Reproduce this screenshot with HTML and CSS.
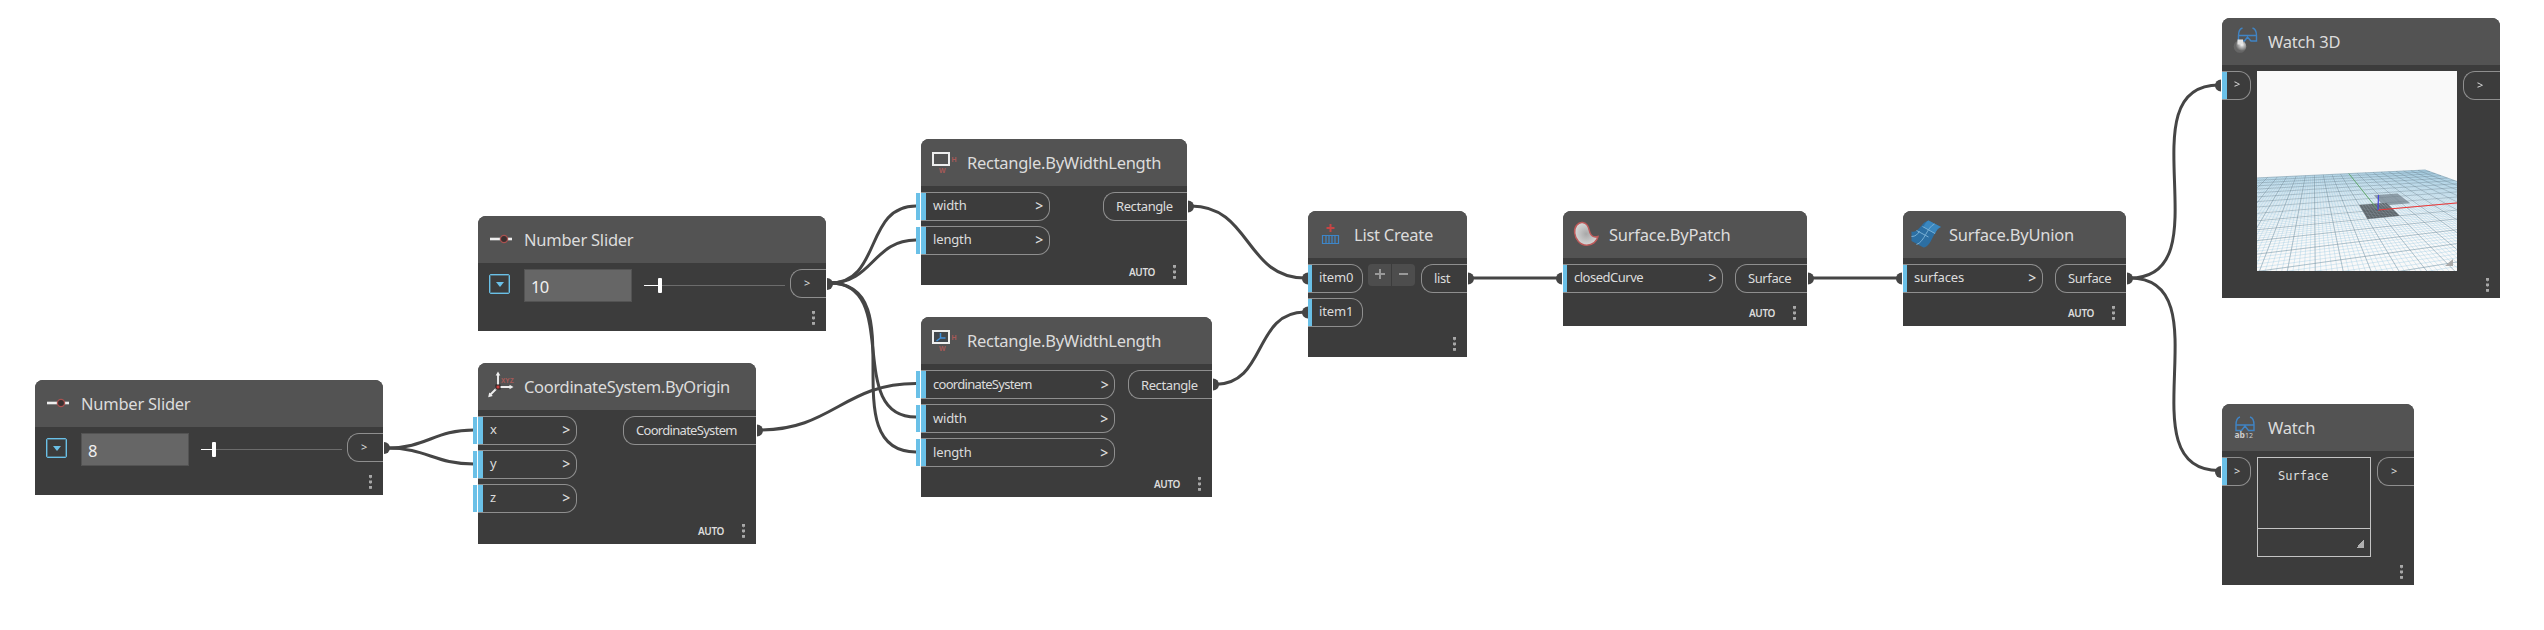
FILE: index.html
```html
<!DOCTYPE html>
<html lang="en">
<head>
<meta charset="utf-8">
<title>Node graph</title>
<link rel="stylesheet" href="styles.css">
</head>
<body>
<main class="graph">
  <svg class="wires" width="2544" height="630" viewBox="0 0 2544 630">
    <g class="wire">
      <path d="M387 448C427 448 434 430 474 430"/>
      <path d="M387 448C427 448 434 464 474 464"/>
      <path d="M830 283C882 283 864 206 916 206"/>
      <path d="M830 283C873 283 873 240 916 240"/>
      <path d="M830 283C902 283 844 417 916 417"/>
      <path d="M830 283C916 283 830 452 916 452"/>
      <path d="M760 430C832 430 844 383.500 916 383.500"/>
      <path d="M1191 206C1251 206 1245 278 1305 278"/>
      <path d="M1215 384.500C1267 384.500 1253 312 1305 312"/>
      <path d="M1471 278H1560"/>
      <path d="M1811 278H1900"/>
      <path d="M2130 278C2226 278 2123 85 2219 85"/>
      <path d="M2130 278C2226 278 2123 470.500 2219 470.500"/>
    </g>
    <g class="plug">
      <path d="M384 442a6 6 0 0 1 0 12z"/><path d="M827 278a6 6 0 0 1 0 12z"/><path d="M757 424.500a6 6 0 0 1 0 12z"/>
      <path d="M1188 200.500a6 6 0 0 1 0 12z"/><path d="M1213 378.500a6 6 0 0 1 0 12z"/><path d="M1468 272.500a6 6 0 0 1 0 12z"/>
      <path d="M1808 272.500a6 6 0 0 1 0 12z"/><path d="M2127 272.500a6 6 0 0 1 0 12z"/>
      <path d="M1308 272.500a6 6 0 0 0 0 12z"/><path d="M1308 306.500a6 6 0 0 0 0 12z"/>
      <path d="M1562 272.500a6 6 0 0 0 0 12z"/><path d="M1902 272.500a6 6 0 0 0 0 12z"/>
      <path d="M2221 79.500a6 6 0 0 0 0 12z"/><path d="M2221 466a6 6 0 0 0 0 12z"/>
    </g>
  </svg>

  <section class="node slider-a">
    <header class="head"><svg class="icon" viewBox="0 0 30 30"><path d="M4 15h22" stroke="#eee" stroke-width="2.600"/><circle cx="18" cy="15" r="3.600" fill="#3a3030" stroke="#a9514f" stroke-width="1.300"/></svg><h2>Number Slider</h2></header>
    <div class="body slide">
      <span class="drop"></span><span class="value">8</span>
      <span class="track"><i class="fill"></i><i class="thumb"></i></span>
      <div class="outputs"><span class="out bare">&gt;</span></div>
    </div>
    <footer class="foot"><span class="dots"></span></footer>
  </section>

  <section class="node slider-b">
    <header class="head"><svg class="icon" viewBox="0 0 30 30"><path d="M4 15h22" stroke="#eee" stroke-width="2.600"/><circle cx="18" cy="15" r="3.600" fill="#3a3030" stroke="#a9514f" stroke-width="1.300"/></svg><h2>Number Slider</h2></header>
    <div class="body slide">
      <span class="drop"></span><span class="value">10</span>
      <span class="track"><i class="fill longer"></i><i class="thumb"></i></span>
      <div class="outputs"><span class="out bare">&gt;</span></div>
    </div>
    <footer class="foot"><span class="dots"></span></footer>
  </section>

  <section class="node coords">
    <header class="head"><svg class="icon" viewBox="0 0 30 30"><path d="M12 16V3M12 16h13M12 16l-8 8" stroke="#eee" stroke-width="1.900"/><path d="M9.700 4.500L12 .500l2.300 4zM23.500 13.700l4 2.300-4 2.300zM3.200 21.500l-1 4.700 4.600-1.300z" fill="#eee"/><rect x="10" y="14" width="4" height="4" fill="#c5403f" stroke="#222"/><text x="15" y="12.300" class="tag xyz">XYZ</text></svg><h2>CoordinateSystem.ByOrigin</h2></header>
    <div class="body">
      <div class="inputs">
        <span class="in dual">x<b>&gt;</b></span><span class="in dual">y<b>&gt;</b></span><span class="in dual">z<b>&gt;</b></span>
      </div>
      <div class="outputs"><span class="out tight">CoordinateSystem</span></div>
    </div>
    <footer class="foot"><span class="auto">AUTO</span><span class="dots"></span></footer>
  </section>

  <section class="node rect-a">
    <header class="head"><svg class="icon" viewBox="0 0 30 30"><rect x="4" y="6" width="16" height="12" fill="none" stroke="#eee" stroke-width="2"/><text x="22.500" y="14.500" class="tag">H</text><text x="10" y="26" class="tag">W</text></svg><h2>Rectangle.ByWidthLength</h2></header>
    <div class="body">
      <div class="inputs"><span class="in dual">width<b>&gt;</b></span><span class="in dual">length<b>&gt;</b></span></div>
      <div class="outputs"><span class="out">Rectangle</span></div>
    </div>
    <footer class="foot"><span class="auto">AUTO</span><span class="dots"></span></footer>
  </section>

  <section class="node rect-b">
    <header class="head"><svg class="icon" viewBox="0 0 30 30"><rect x="4" y="6" width="16" height="12" fill="#42474c" stroke="#eee" stroke-width="2"/><path d="M11.500 8v5h5M11.500 13l-4 3" fill="none" stroke="#3f8fd8" stroke-width="1.500"/><text x="22.500" y="14.500" class="tag">H</text><text x="10" y="26" class="tag">W</text></svg><h2>Rectangle.ByWidthLength</h2></header>
    <div class="body">
      <div class="inputs"><span class="in dual tight">coordinateSystem<b>&gt;</b></span><span class="in dual">width<b>&gt;</b></span><span class="in dual">length<b>&gt;</b></span></div>
      <div class="outputs"><span class="out">Rectangle</span></div>
    </div>
    <footer class="foot"><span class="auto">AUTO</span><span class="dots"></span></footer>
  </section>

  <section class="node list">
    <header class="head"><svg class="icon" viewBox="0 0 30 30"><path d="M14.500 5v8M10.500 9h8" stroke="#c64545" stroke-width="2"/><path d="M6.500 16.500h16v8h-16zM10 17v7M13 17v7M16 17v7M19 17v7" fill="none" stroke="#3d86c9" stroke-width="1.200"/></svg><h2>List Create</h2></header>
    <div class="body">
      <div class="inputs"><span class="in">item0</span><span class="in">item1</span></div>
      <div class="buttons"><span class="btn plus"></span><span class="btn"></span></div>
      <div class="outputs"><span class="out">list</span></div>
    </div>
    <footer class="foot"><span class="dots"></span></footer>
  </section>

  <section class="node patch">
    <header class="head"><svg class="icon" viewBox="0 0 30 30"><defs><radialGradient id="blob"><stop offset="0" stop-color="#a8a8a8"/><stop offset="1" stop-color="#d6d6d6"/></radialGradient></defs><path d="M11.500 3.500C7 3 3 8 3.700 14c.7 6.500 5.300 12.300 12 12.300 6 0 10.300-4 11.300-8.800-3 1-6.300 0-7.800-3.200C17.500 10.500 18 4.500 11.500 3.500z" fill="url(#blob)" stroke="#bd5a5a" stroke-width="1.500"/></svg><h2>Surface.ByPatch</h2></header>
    <div class="body">
      <div class="inputs"><span class="in camel">closedCurve<b>&gt;</b></span></div>
      <div class="outputs"><span class="out">Surface</span></div>
    </div>
    <footer class="foot"><span class="auto">AUTO</span><span class="dots"></span></footer>
  </section>

  <section class="node union">
    <header class="head"><svg class="icon" viewBox="0 0 30 30"><path d="M.500 12.500C8 14.500 10 3 17.500 1.500L30 8C22.500 10 21 28 12.500 28.500L.500 22z" fill="#2c6fa3"/><path d="M17.500 1.500L30 8c-3 1-4.500 3.500-6 7L12.500 8c1.500-3.500 3-6 5-6.500z" fill="#3a87bf"/><path d="M5.500 11.500l12 6.500M11.500 7.500l12.500 7M5.500 25.500C13.500 23 16 8 23.500 5M.500 17.500c4 0 6-2 8-5.500M12.500 28.500" fill="none" stroke="#78afd4" stroke-width="1"/></svg><h2>Surface.ByUnion</h2></header>
    <div class="body">
      <div class="inputs"><span class="in">surfaces<b>&gt;</b></span></div>
      <div class="outputs"><span class="out">Surface</span></div>
    </div>
    <footer class="foot"><span class="auto">AUTO</span><span class="dots"></span></footer>
  </section>

  <section class="node watch3d">
    <header class="head"><svg class="icon" viewBox="0 0 30 30"><defs><radialGradient id="ball" cx=".65" cy=".35"><stop offset="0" stop-color="#fff"/><stop offset=".4" stop-color="#bbb"/><stop offset="1" stop-color="#666"/></radialGradient></defs><path d="M12.500 2C9.500 3 8.500 6 8.500 9.500h18C26.500 6 25.500 3 22.500 2M8.500 9.500V15h6l3-4 3.500 4h5.500V9.500" fill="none" stroke="#4084c4" stroke-width="1.400"/><circle cx="10" cy="20.500" r="6.300" fill="url(#ball)"/><path d="M7.500 13.500h5.500v5h-5.500z" fill="#e2e2e2"/></svg><h2>Watch 3D</h2></header>
    <div class="body">
      <div class="inputs"><span class="in bare wide">&gt;</span></div>
      <canvas class="view" id="view" width="200" height="200"></canvas>
      <div class="outputs"><span class="out bare">&gt;</span></div>
    </div>
    <footer class="foot"><span class="dots"></span></footer>
  </section>

  <section class="node watch">
    <header class="head"><svg class="icon" viewBox="0 0 30 30"><path d="M10 5C6.500 6 6 9 6 13h18C24 9 23.500 6 20 5M6 13v5.500h5.500l3.500-4.500 3.500 4.500H24V13" fill="none" stroke="#4084c4" stroke-width="1.400"/><text x="4.500" y="25.500" class="ab">ab<tspan class="num">12</tspan></text></svg><h2>Watch</h2></header>
    <div class="body">
      <div class="inputs"><span class="in bare wide">&gt;</span></div>
      <div class="result"><div class="text">Surface</div><div class="bar"><i class="grip"></i></div></div>
      <div class="outputs"><span class="out bare">&gt;</span></div>
    </div>
    <footer class="foot"><span class="dots"></span></footer>
  </section>
</main>
<script src="view.js"></script>
</body>
</html>
```
FILE: styles.css
```css
body { margin: 0; background: #fff; font-family: "Noto Sans", sans-serif; color: #dcdcdc; }
.graph { position: relative; width: 2544px; height: 630px; overflow: hidden; }
.wires { position: absolute; left: 0; top: 0; }
.wire { fill: none; stroke: #454545; stroke-width: 3; }
.plug { fill: #454545; }

.node { position: absolute; display: flex; flex-direction: column; background: #3c3c3c; border-radius: 8px 8px 0 0; }
.slider-a { left: 35px; top: 380px; width: 348px; height: 115px; }
.slider-b { left: 478px; top: 216px; width: 348px; height: 115px; }
.coords { left: 478px; top: 363px; width: 278px; height: 181px; }
.rect-a { left: 921px; top: 139px; width: 266px; height: 146px; }
.rect-b { left: 921px; top: 317px; width: 291px; height: 180px; }
.list { left: 1308px; top: 211px; width: 159px; height: 146px; }
.patch { left: 1563px; top: 211px; width: 244px; height: 115px; }
.union { left: 1903px; top: 211px; width: 223px; height: 115px; }
.watch3d { left: 2222px; top: 18px; width: 278px; height: 280px; }
.watch { left: 2222px; top: 404px; width: 192px; height: 181px; }

.head { display: flex; align-items: center; gap: 8px; box-sizing: border-box; height: 46.5px; padding-left: 8px; background: #535353; border-radius: 8px 8px 0 0; flex: none; }
.icon { width: 30px; height: 30px; flex: none; }
h2 { margin: 0; padding-top: 1px; font-size: 16.5px; font-weight: 400; line-height: 24px; letter-spacing: -0.24px; white-space: nowrap; }
.coords h2 { letter-spacing: -0.33px; }
.rect-a h2, .rect-b h2 { letter-spacing: -0.28px; }
.tag { font: 700 7px "Liberation Sans", sans-serif; fill: #a85a58; }
.xyz { font-size: 6.5px; }
.ab { font: 700 8.5px "Noto Sans", sans-serif; fill: #ccc; }
.num { font-size: 7px; font-weight: 400; }

.body { display: flex; align-items: flex-start; padding-top: 6px; }
.rect-b .body, .slide, .watch .body { padding-top: 6.5px; }
.inputs { display: flex; flex-direction: column; gap: 5px; }
.outputs { margin-left: auto; }
.in, .out { position: relative; display: flex; align-items: center; box-sizing: border-box; height: 29px; font-size: 13px; line-height: 18px; border: 1px solid #8f8f8f; white-space: nowrap; }
.in { justify-content: space-between; border-left: 0; border-radius: 0 12px 12px 0; padding: 0 6px 2px 7px; letter-spacing: -0.15px; }
.in::before { content: ""; position: absolute; left: 0; top: 0; width: 4px; height: 27px; background: #6ac0e7; }
.in.dual { padding-left: 12px; }
.dual::before, .wide::before { width: 5px; }
.dual::after { content: ""; position: absolute; left: -5px; top: 0; width: 4px; height: 27px; background: #6ac0e7; }
.in b { font-weight: 500; font-size: 14px; padding-top: 2px; }
.out { border-right: 0; border-radius: 12px 0 0 12px; padding-left: 12px; letter-spacing: -0.4px; }
.in.camel { letter-spacing: -0.5px; }
.in.tight, .out.tight { letter-spacing: -0.7px; }
.in.bare { width: 29px; padding: 0 0 2px 12px; font-size: 11px; }
.out.bare { width: 36px; padding: 0 0 1px 13px; font-size: 11px; }
.watch .out.bare, .watch3d .out.bare { width: 37px; }

.coords .in { width: 99px; }
.rect-a .in { width: 129px; }
.rect-b .in { width: 194px; }
.list .in { width: 55px; padding-left: 11px; }
.patch .in { width: 160px; padding-left: 11px; }
.union .in { width: 140px; padding-left: 11px; }
.coords .out { width: 133px; }
.rect-a .out, .rect-b .out { width: 84px; }
.list .out { width: 46px; }
.patch .out { width: 72px; }
.union .out { width: 71px; }

.foot { display: flex; align-items: center; justify-content: flex-end; gap: 18px; height: 27px; margin-top: auto; padding-right: 11px; }
.auto { font-size: 10px; font-weight: 600; line-height: 14px; letter-spacing: -0.4px; }
.dots { width: 3px; height: 14px; background: radial-gradient(circle at 1.5px 1.5px, #a8a8a8 1.5px, transparent 1.9px) 0 0 / 3px 5.5px repeat-y; }

.drop { box-sizing: border-box; width: 21px; height: 20px; margin: 5px 14px 0 11px; border: 1px solid #6ac0e7; border-radius: 2px; box-shadow: inset 0 0 0 1px rgba(106, 192, 231, .4); display: grid; place-items: center; }
.drop::before { content: ""; border: 4px solid transparent; border-top: 5px solid #6ac0e7; border-bottom: 0; }
.value { box-sizing: border-box; width: 108px; height: 33px; padding: 1px 6px; border: 1px solid #535353; background: #666; font-size: 16.5px; line-height: 31px; letter-spacing: -0.7px; color: #f0f0f0; }
.track { display: flex; align-items: center; width: 141px; height: 33px; margin-left: 12px; background: linear-gradient(#6c6c6c, #6c6c6c) 0 16px / 100% 1px no-repeat; }
.fill { width: 11px; height: 1px; background: #fff; }
.fill.longer { width: 14px; }
.thumb { width: 4px; height: 15px; background: #fff; border-radius: 1px; }

.buttons { display: flex; gap: 1px; margin-left: 5px; }
.btn { width: 23px; height: 22px; border-radius: 0 4px 4px 0; background: linear-gradient(#999, #999) 7px 9px / 9px 2px no-repeat #4d4d4d; }
.btn.plus { border-radius: 4px 0 0 4px; background: linear-gradient(#999, #999) 7px 9px / 10px 2px no-repeat, linear-gradient(#999, #999) 11px 5px / 2px 10px no-repeat #4d4d4d; }

.view { display: block; width: 200px; height: 200px; margin-left: 6px; }
.result { box-sizing: border-box; width: 114px; height: 100px; margin-left: 6px; border: 1px solid #c4c4c4; display: flex; flex-direction: column; }
.text { flex: 1; padding: 9px 0 0 20px; font: 12px/19px "DejaVu Sans Mono", monospace; }
.bar { display: flex; justify-content: flex-end; align-items: center; height: 28px; padding: 2px 6px 0 0; box-sizing: border-box; border-top: 1px solid #c4c4c4; }
.grip { width: 8px; height: 8px; background: linear-gradient(135deg, transparent 50%, #b0b0b0 50%); }
```
FILE: view.js
```js
// Two-point perspective of the ground grid, one unit = one major cell.
const ctx = document.getElementById('view').getContext('2d');
const project = (u, v) => {
  const p = u * 0.0165, q = v * 0.0835, w = 1 + p + q;
  return [(121 + p * 1016 + q * 57) / w, (139 + (p + q) * 59) / w];
};
const line = (a, b, color, width) => {
  ctx.strokeStyle = color;
  ctx.lineWidth = width;
  ctx.beginPath();
  ctx.moveTo(...project(...a));
  ctx.lineTo(...project(...b));
  ctx.stroke();
};
const quad = (u, v, size, color) => {
  ctx.fillStyle = color;
  ctx.beginPath();
  [[u, v], [u + size, v], [u + size, v + size], [u, v + size]].forEach(c => ctx.lineTo(...project(...c)));
  ctx.fill();
};
ctx.fillStyle = '#f9f9f9';
ctx.fillRect(0, 0, 200, 200);
for (let i = -50; i <= 50; i++) {
  const t = i / 5;
  line([t, -7], [t, 10], 'rgba(150,198,224,.42)', 0.85);
  if (t >= -7) line([-10, t], [10, t], 'rgba(150,198,224,.42)', 0.85);
}
for (let t = -10; t <= 10; t++) {
  line([t, -7], [t, 10], 'rgba(100,120,132,.42)', 0.8);
  if (t >= -7) line([-10, t], [10, t], 'rgba(100,120,132,.42)', 0.8);
}
quad(0.6, 0.6, 2, 'rgba(85,102,114,.65)');
quad(-1, -1, 2, 'rgba(45,52,57,.8)');
for (let i = 0; i <= 10; i++) {
  const t = i / 5;
  line([t - 1, -1], [t - 1, 1], 'rgba(200,210,215,.4)', 0.6);
  line([-1, t - 1], [1, t - 1], 'rgba(200,210,215,.4)', 0.6);
  line([t + 0.6, 0.6], [t + 0.6, 2.6], 'rgba(200,210,215,.3)', 0.5);
  line([0.6, t + 0.6], [2.6, t + 0.6], 'rgba(200,210,215,.3)', 0.5);
}
line([0, 0], [0, 10], '#5fae6c', 0.9);
line([0, 0], [10, 0], '#f03a3a', 1);
ctx.strokeStyle = '#4646e0';
ctx.lineWidth = 1.2;
ctx.beginPath();
ctx.moveTo(121, 139);
ctx.lineTo(121.5, 124);
ctx.stroke();
ctx.fillStyle = '#aaa';
ctx.beginPath();
ctx.moveTo(188, 195);
ctx.lineTo(196, 195);
ctx.lineTo(196, 188);
ctx.fill();
```
